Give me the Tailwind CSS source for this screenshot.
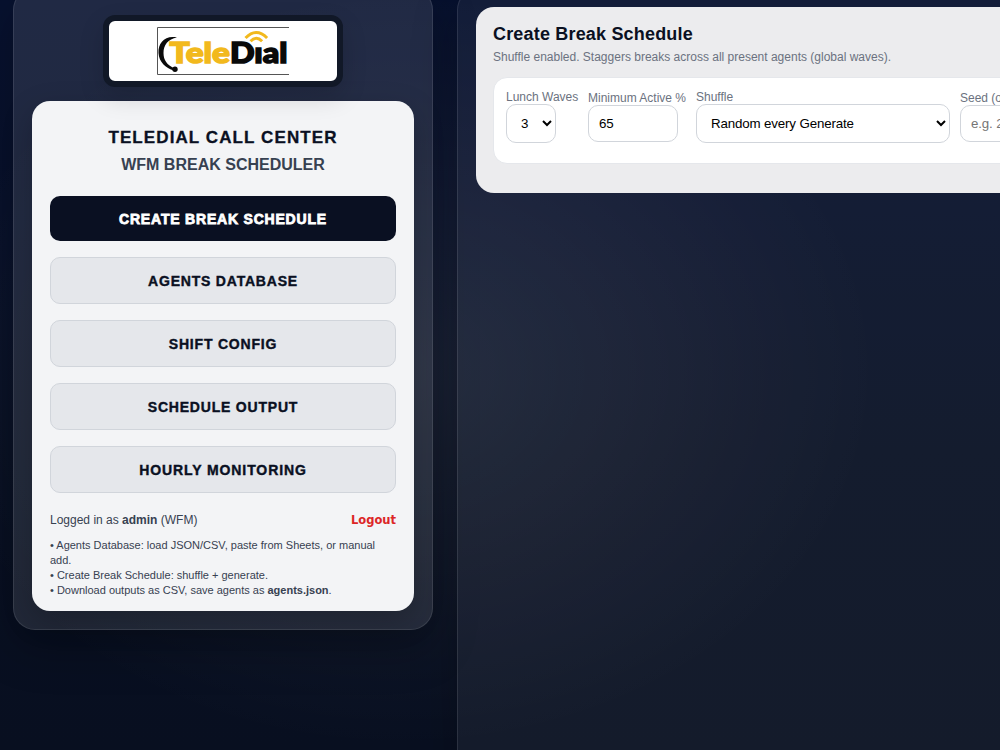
<!DOCTYPE html>
<html lang="en">
<head>
    <meta charset="UTF-8">
    <meta name="viewport" content="width=device-width, initial-scale=1.0">
    <title>TeleDial WFM Break Scheduler</title>
    <script src="https://cdn.jsdelivr.net/npm/@tailwindcss/browser@4"></script>
</head>
<body class="h-screen overflow-hidden bg-[#0b1220] bg-[radial-gradient(ellipse_480px_380px_at_400px_370px,rgba(255,255,255,0.08),transparent),linear-gradient(180deg,#07112f_0%,#08112b_28%,#081023_60%,#080f20_100%)] font-['Liberation_Sans',Arial,sans-serif] text-[#0a1022]">
    <div class="-mt-3 ml-[13px] flex w-[1300px] items-start gap-6">
        <!-- Sidebar -->
        <aside class="w-[420px] shrink-0 rounded-[22px] border border-white/10 bg-white/10 px-[18px] pt-[26px] pb-[18px] shadow-[0_18px_45px_rgba(0,0,0,0.25)]">
            <div class="relative z-10 mx-auto flex h-[72px] w-[240px] items-center justify-center rounded-xl border-6 border-[#111827] bg-white shadow-[0_10px_25px_rgba(0,0,0,0.15)]">
                <svg class="h-12 w-[132px]" viewBox="0 0 132 48">
                    <path d="M132 .5H.5v47H132" fill="none" stroke="#555" stroke-width="1"/>
                    <path d="M20 10.500C8 8 1 16 1.500 26c.5 9 7 15 15.500 17.500l.5-2C10 38 6.500 33 6.500 26 6.500 18 11 12 20 10.500z" fill="#0a0a0a"/>
                    <circle cx="18" cy="42.300" r="2.700" fill="#0a0a0a"/>
                    <text x="12.500" y="36.300" textLength="60.500" lengthAdjust="spacingAndGlyphs" font-family="Lato" font-weight="900" font-size="28" fill="#f2b91d" stroke="#f2b91d" stroke-width="1.500">Tele</text>
                    <text x="73" y="36.300" textLength="57.500" lengthAdjust="spacingAndGlyphs" font-family="Lato" font-weight="900" font-size="28" fill="#0a0a0a" stroke="#0a0a0a" stroke-width="1.500">Dıal</text>
                    <path d="M88.500 11q10.800-11 21.600 0M93.500 14.300q5.800-6 11.600 0" fill="none" stroke="#f2b91d" stroke-width="3"/>
                </svg>
            </div>
            <div class="mt-3.5 h-[510px] rounded-[18px] bg-[#f3f4f6] px-[18px] pt-[27px] shadow-[0_10px_30px_rgba(0,0,0,0.22)]">
                <h1 class="text-center text-[17px] leading-5 font-bold tracking-[1.1px] [-webkit-text-stroke:0.3px]">TELEDIAL CALL CENTER</h1>
                <h2 class="mt-[7px] text-center text-base leading-5 font-bold text-[#374151]">WFM BREAK SCHEDULER</h2>
                <nav class="mt-[21px] flex flex-col gap-4 text-sm font-bold tracking-[0.8px] [-webkit-text-stroke:0.4px]">
                    <button class="h-[45px] rounded-[10px] bg-[#0a1022] text-white [-webkit-text-stroke:0.8px]">CREATE BREAK SCHEDULE</button>
                    <button class="h-[47px] rounded-[10px] border border-[#d1d5db] bg-[#e5e7eb]">AGENTS DATABASE</button>
                    <button class="h-[47px] rounded-[10px] border border-[#d1d5db] bg-[#e5e7eb]">SHIFT CONFIG</button>
                    <button class="h-[47px] rounded-[10px] border border-[#d1d5db] bg-[#e5e7eb]">SCHEDULE OUTPUT</button>
                    <button class="h-[47px] rounded-[10px] border border-[#d1d5db] bg-[#e5e7eb] tracking-[0.9px]">HOURLY MONITORING</button>
                </nav>
                <div class="mt-[18px] flex items-center justify-between text-xs leading-[18px] text-[#374151]">
                    <span>Logged in as <b>admin</b> (WFM)</span>
                    <a class="font-['DejaVu_Sans'] text-[11.5px] font-bold text-[#dc2626]">Logout</a>
                </div>
                <div class="mt-[9px] text-[11px] leading-[15px] text-[#374151]">
                    • Agents Database: load JSON/CSV, paste from Sheets, or manual add.<br>
                    • Create Break Schedule: shuffle + generate.<br>
                    • Download outputs as CSV, save agents as <b>agents.json</b>.
                </div>
            </div>
        </aside>

        <!-- Main panel -->
        <main class="h-[900px] grow rounded-[22px] border border-white/10 bg-white/5 p-[18px] shadow-[0_18px_45px_rgba(0,0,0,0.25)]">
            <section class="h-[186px] rounded-[18px] bg-[#ececee] px-[17px] pt-4">
                <h2 class="text-lg leading-[22px] font-bold tracking-[0.18px]">Create Break Schedule</h2>
                <p class="mt-1 text-xs leading-4 text-[#6b7280]">Shuffle enabled. Staggers breaks across all present agents (global waves).</p>
                <div class="mt-3 flex h-[87px] gap-2.5 rounded-[14px] border border-[#e5e7eb] bg-white px-3 pt-3 text-xs leading-[14px] text-[#6b7280]">
                    <label class="w-[72px] whitespace-nowrap">Lunch Waves
                        <select class="block h-[39px] w-[50px] rounded-[10px] border border-[#d1d5db] bg-white px-2.5 text-[13.333px] text-black">
                            <option>3</option>
                        </select>
                    </label>
                    <label class="w-[98px] pt-px whitespace-nowrap">Minimum Active %
                        <input value="65" class="block h-[37px] w-[90px] rounded-[10px] border border-[#d1d5db] px-2.5 text-[13.333px] tracking-[-0.1px] text-black">
                    </label>
                    <label class="w-[254px]">Shuffle
                        <select class="block h-[39px] w-[254px] rounded-[10px] border border-[#d1d5db] bg-white px-2.5 text-[13.333px] tracking-[-0.15px] text-black">
                            <option>Random every Generate</option>
                        </select>
                    </label>
                    <label class="w-[160px] pt-px">Seed (optional)
                        <input placeholder="e.g. 2026" class="block h-[37px] w-[160px] rounded-[10px] border border-[#d1d5db] px-2.5 text-[13.333px] tracking-[-0.15px] text-black placeholder:text-[#757575]">
                    </label>
                </div>
            </section>
        </main>
    </div>
</body>
</html>
